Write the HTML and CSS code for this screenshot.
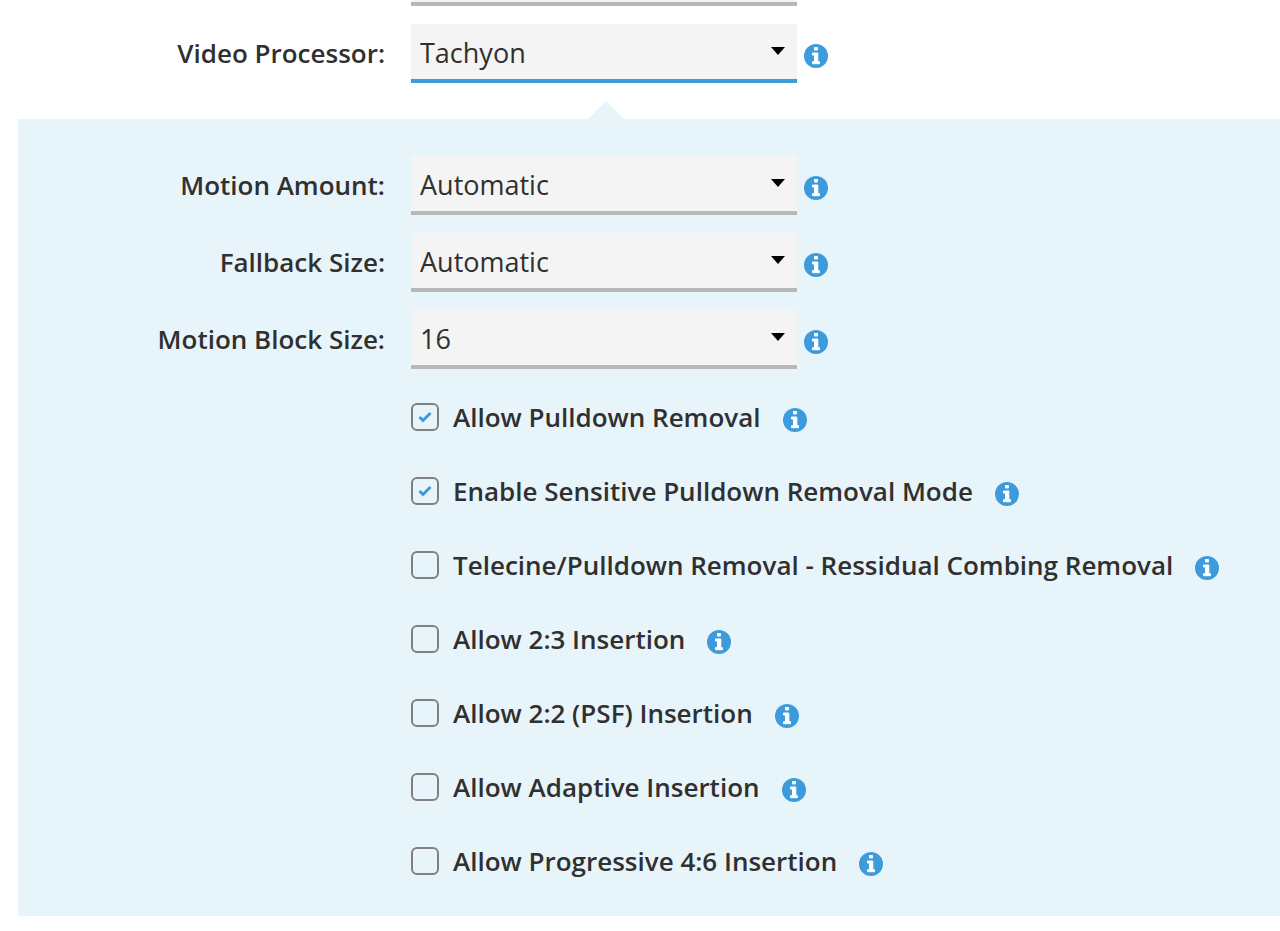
FILE: index.html
```html
<!DOCTYPE html>
<html lang="en">
<head>
    <meta charset="UTF-8">
    <meta name="viewport" content="width=device-width, initial-scale=1.0">
    <title>Video Processor</title>
    <link rel="stylesheet" href="styles.css">
</head>
<body>
    <svg class="sprite" aria-hidden="true">
        <symbol id="icon-info" viewBox="0 0 24 24">
            <circle cx="12" cy="12" r="12" fill="#3d9bdc"/>
            <path d="M10.5 3.5h3v2.5h-3zM8.5 9h5.3v8.7h1.7v2h-7v-2h2v-6.7h-2z" fill="#fff" stroke="#fff" stroke-linejoin="round"/>
        </symbol>
    </svg>

    <form class="settings">
        <div class="previous-field"></div>

        <div class="form-row">
            <label for="processor">Video Processor:</label>
            <div class="select-box active">
                <select id="processor"><option>Tachyon</option></select>
            </div>
            <button type="button" class="info" aria-label="Info"><svg><use href="#icon-info"/></svg></button>
        </div>

        <div class="panel">
            <div class="form-row">
                <label for="motion">Motion Amount:</label>
                <div class="select-box">
                    <select id="motion"><option>Automatic</option></select>
                </div>
                <button type="button" class="info" aria-label="Info"><svg><use href="#icon-info"/></svg></button>
            </div>
            <div class="form-row">
                <label for="fallback">Fallback Size:</label>
                <div class="select-box">
                    <select id="fallback"><option>Automatic</option></select>
                </div>
                <button type="button" class="info" aria-label="Info"><svg><use href="#icon-info"/></svg></button>
            </div>
            <div class="form-row">
                <label for="block">Motion Block Size:</label>
                <div class="select-box">
                    <select id="block"><option>16</option></select>
                </div>
                <button type="button" class="info" aria-label="Info"><svg><use href="#icon-info"/></svg></button>
            </div>

            <div class="checks">
                <div class="check-row">
                    <span class="check-box"><input type="checkbox" id="pulldown" checked><svg viewBox="0 0 28 28"><path d="M8.5 14l3.5 3.5 7.5-7.5"/></svg></span>
                    <label for="pulldown">Allow Pulldown Removal</label>
                    <button type="button" class="info" aria-label="Info"><svg><use href="#icon-info"/></svg></button>
                </div>
                <div class="check-row">
                    <span class="check-box"><input type="checkbox" id="sensitive" checked><svg viewBox="0 0 28 28"><path d="M8.5 14l3.5 3.5 7.5-7.5"/></svg></span>
                    <label for="sensitive">Enable Sensitive Pulldown Removal Mode</label>
                    <button type="button" class="info" aria-label="Info"><svg><use href="#icon-info"/></svg></button>
                </div>
                <div class="check-row">
                    <span class="check-box"><input type="checkbox" id="telecine"><svg viewBox="0 0 28 28"><path d="M8.5 14l3.5 3.5 7.5-7.5"/></svg></span>
                    <label for="telecine">Telecine/Pulldown Removal - Ressidual Combing Removal</label>
                    <button type="button" class="info" aria-label="Info"><svg><use href="#icon-info"/></svg></button>
                </div>
                <div class="check-row">
                    <span class="check-box"><input type="checkbox" id="insert23"><svg viewBox="0 0 28 28"><path d="M8.5 14l3.5 3.5 7.5-7.5"/></svg></span>
                    <label for="insert23">Allow 2:3 Insertion</label>
                    <button type="button" class="info" aria-label="Info"><svg><use href="#icon-info"/></svg></button>
                </div>
                <div class="check-row">
                    <span class="check-box"><input type="checkbox" id="insert22"><svg viewBox="0 0 28 28"><path d="M8.5 14l3.5 3.5 7.5-7.5"/></svg></span>
                    <label for="insert22">Allow 2:2 (PSF) Insertion</label>
                    <button type="button" class="info" aria-label="Info"><svg><use href="#icon-info"/></svg></button>
                </div>
                <div class="check-row">
                    <span class="check-box"><input type="checkbox" id="adaptive"><svg viewBox="0 0 28 28"><path d="M8.5 14l3.5 3.5 7.5-7.5"/></svg></span>
                    <label for="adaptive">Allow Adaptive Insertion</label>
                    <button type="button" class="info" aria-label="Info"><svg><use href="#icon-info"/></svg></button>
                </div>
                <div class="check-row">
                    <span class="check-box"><input type="checkbox" id="progressive"><svg viewBox="0 0 28 28"><path d="M8.5 14l3.5 3.5 7.5-7.5"/></svg></span>
                    <label for="progressive">Allow Progressive 4:6 Insertion</label>
                    <button type="button" class="info" aria-label="Info"><svg><use href="#icon-info"/></svg></button>
                </div>
            </div>
        </div>
    </form>
</body>
</html>
```
FILE: styles.css
```css
* {
    box-sizing: border-box;
}
body {
    margin: 0;
    background: #fff;
    color: #303030;
    font-family: 'Open Sans', sans-serif;
    font-size: 26px;
}
.sprite {
    display: none;
}
.settings {
    padding-left: 18px;
}
/* bottom edge of the field above */
.previous-field {
    width: 386px;
    height: 6px;
    margin-left: 393px;
    margin-bottom: 18px;
    background: #f4f4f4;
    border-bottom: 4px solid #b8b8b8;
}
.form-row {
    display: grid;
    grid-template-columns: 393px 386px 31px;
    align-items: center;
    margin-bottom: 18px;
}
.form-row label {
    padding: 0 26px 2px 0;
    text-align: right;
}
.form-row .info {
    margin-left: 7px;
}
label {
    font-weight: 600;
    line-height: 36px;
}
.select-box {
    position: relative;
}
.select-box select {
    display: block;
    width: 100%;
    height: 59px;
    padding: 2px 40px 0 9px;
    border: none;
    border-bottom: 4px solid #b8b8b8;
    border-radius: 0;
    background: #f4f4f4;
    color: #303030;
    font-family: inherit;
    font-size: 27px;
    appearance: none;
    outline: none;
}
.select-box.active select {
    border-bottom-color: #3d9bdc;
}
.select-box::after {
    content: "";
    position: absolute;
    top: 23px;
    right: 12px;
    border: 7px solid transparent;
    border-top: 8px solid #000;
    border-bottom: none;
    pointer-events: none;
}
.info {
    flex: none;
    width: 24px;
    height: 24px;
    margin-top: 5px;
    padding: 0;
    border: none;
    background: none;
    cursor: pointer;
}
.info svg {
    display: block;
    width: 24px;
    height: 24px;
}
.panel {
    position: relative;
    margin-top: 36px;
    padding: 37px 0 18px;
    background: #e7f4fa;
}
/* pointer towards the processor field */
.panel::before {
    content: "";
    position: absolute;
    top: -18px;
    left: 570px;
    border: 18px solid transparent;
    border-top: none;
    border-bottom-color: #e7f4fa;
}
.checks {
    margin-left: 393px;
    margin-top: -7px;
}
.check-row {
    display: flex;
    align-items: center;
    height: 74px;
}
.check-row label {
    margin-left: 14px;
    margin-right: 22px;
}
.check-box {
    position: relative;
    flex: none;
    width: 28px;
    height: 28px;
}
.check-box input {
    display: block;
    width: 28px;
    height: 28px;
    margin: 0;
    border: 2px solid #808080;
    border-radius: 6px;
    appearance: none;
}
.check-box svg {
    display: none;
    position: absolute;
    inset: 0;
    fill: none;
    stroke: #3d9bdc;
    stroke-width: 3;
    pointer-events: none;
}
.check-box input:checked + svg {
    display: block;
}
```
